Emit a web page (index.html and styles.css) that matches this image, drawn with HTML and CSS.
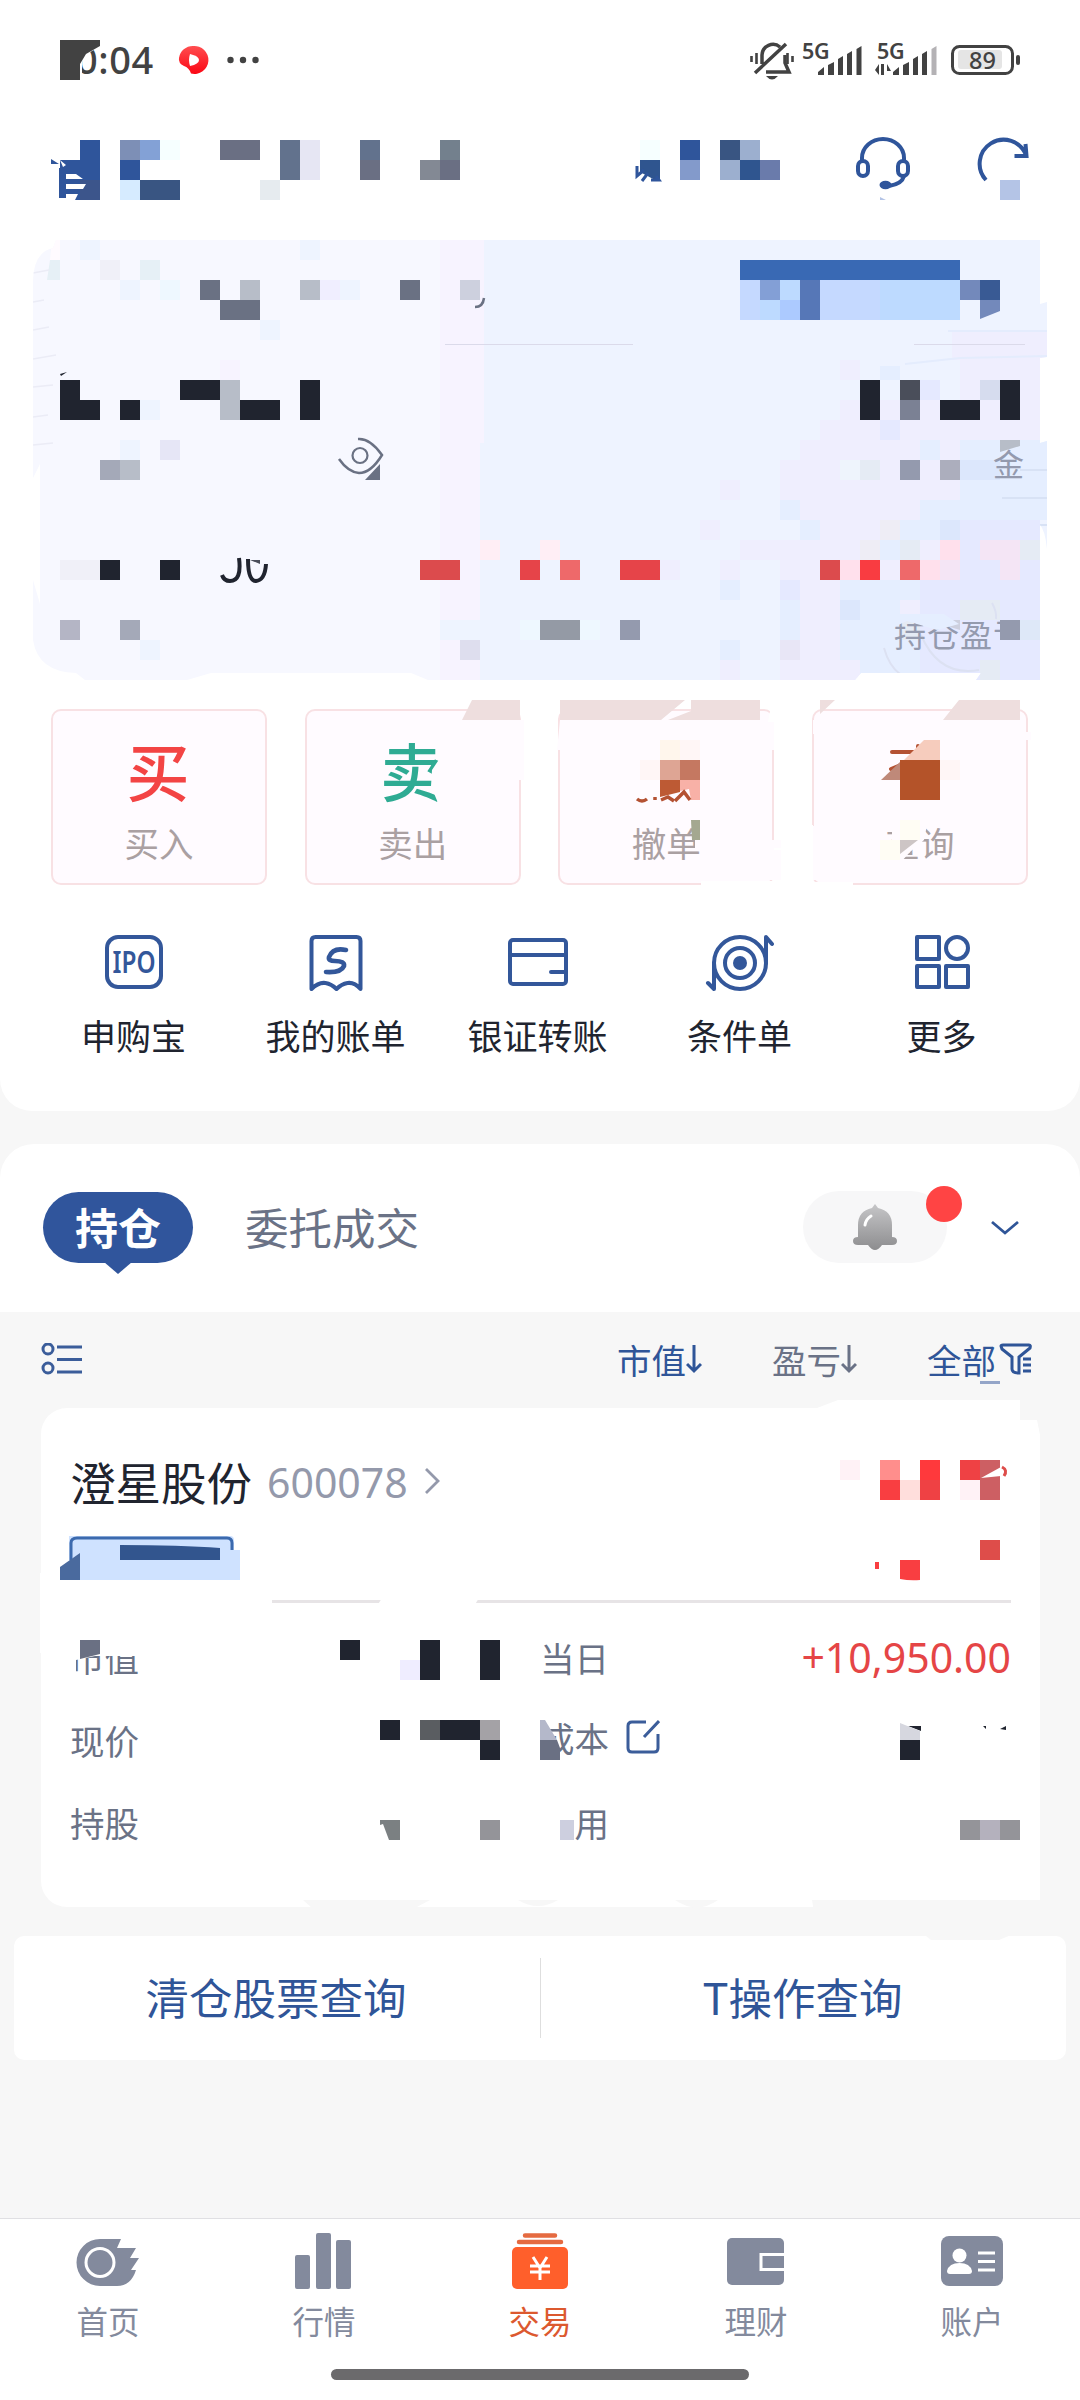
FILE: index.html
```html
<!DOCTYPE html>
<html lang="zh-CN">
<head>
<meta charset="utf-8">
<title>交易</title>
<link rel="stylesheet" href="styles.css">
</head>
<body>
<main class="screen">
  <section class="panel account">
    <header class="status">
      <span class="time">0:04</span>
      <svg class="layer" viewBox="0 0 1080 120">
        <path fill="#fff" d="M76 40h24v6l-16 10-2 6v18h-6z"/>
        <path fill="#424242" d="M60 40h40v6l-14 8-6 10v16H60z"/>
        <path fill="url(#red)" d="M193 46a14 14 0 1 1-2 27.500q-2-6-7-7.500-6-3-5-8a14 14 0 0 1 14-12z"/>
        <path fill="#fff" d="M190 54q9 2 9 6t-9 6q-2-6 0-12z"/>
        <g fill="#424242"><circle cx="230.500" cy="60" r="3.200"/><circle cx="243" cy="60" r="3.200"/><circle cx="255.500" cy="60" r="3.200"/></g>
        <g fill="none" stroke="#424242" stroke-width="3.500">
          <path d="M762 64V55a11 11 0 0 1 18-8M785 55v8l4 9H766M755 73l31-29"/>
          <path stroke-width="2.600" d="M751.500 56v6M756.500 53v11M787.500 53v11M792.500 56v6"/>
        </g>
        <path fill="#424242" d="M766 76h12q-6 7-12 0z"/>
        <path fill="#424242" d="M818 75v-3l6-5v8zM828 75V65l6-3v13zM838 75V59l5-3v19zM847 75V54l5-3v24zM856.500 75V49l5-3v29zM893 75v-3l6-5v8zM903 75V65l6-3v13zM913 75V59l5-3v19zM922 75V54l5-3v24zM875 70l4-6v11zM881 64h3v11h-3zM887 64l4 7h-4z"/>
        <path fill="#b4b2b5" d="M931.500 75V49l5-3v29z"/>
        <rect x="952.500" y="46.500" width="60" height="27" rx="7" fill="none" stroke="#424242" stroke-width="3"/>
        <rect x="958" y="50" width="44" height="19" rx="3" fill="#e5e5e5"/>
        <rect x="1016" y="55" width="4" height="10" rx="2" fill="#424242"/>
        <defs><linearGradient id="red" x2="0" y2="1"><stop stop-color="#ff4e50"/><stop offset="1" stop-color="#fb0714"/></linearGradient></defs>
      </svg>
      <span class="net net-a">5G</span><span class="net net-b">5G</span><span class="charge">89</span>
    </header>

    <div class="topbar">
      <svg class="layer" viewBox="0 120 1080 120">
        <path fill="#2f559b" d="M80 140h20v40H80zM60 160h20v20H60zM59 168h8v30h-8zM51 159l8 5h-8zM120 160h20v20h-20zM680 140h20v20h-20z"/>
        <path fill="#3c558b" d="M80 180h20v20H76z"/>
        <path fill="#2f559b" d="M66 180h14v20H66z"/>
        <path fill="#fff" d="M60 160l6 5-3 2zM66 174h10l7 5H66zM66 184h20l-3 5H66zM66 194h12l-3 6h-9z"/>
        <path fill="#7d8fb6" d="M120 140h20v20h-20z"/><path fill="#83a1d6" d="M140 140h20v20h-20z"/>
        <path fill="#f6ffff" d="M160 140h20v20h-20zM640 140h20v20h-20z"/><path fill="#d6ebff" d="M120 180h20v20h-20z"/>
        <path fill="#395582" d="M140 180h40v20h-40zM720 140h20v20h-20z"/>
        <path fill="#6a6f83" d="M220 140h40v20h-40zM360 160h20v20h-20zM440 160h20v20h-20z"/>
        <path fill="#62728d" d="M280 140h20v40h-20zM360 140h20v20h-20z"/>
        <path fill="#e6e6f3" d="M300 140h20v40h-20z"/><path fill="#e6ebef" d="M260 180h20v20h-20z"/>
        <path fill="#73808d" d="M440 140h20v20h-20z"/><path fill="#838994" d="M420 160h20v20h-20z"/>
        <path fill="#2f558f" d="M640 160h20v20h-5l-15-8zM740 160h20v20h-20z"/>
        <path fill="none" stroke="#2f559b" stroke-width="3" d="M637 166v10l7-6M642 181l6-8M651 180h8l-3-4"/>
        <path fill="#839acb" d="M680 160h20v20h-20z"/><path fill="#9cafcf" d="M740 140h20v20h-20zM720 160h20v20h-20z"/>
        <path fill="#6a7bab" d="M760 160h20v20h-20z"/><path fill="#b4c4e6" d="M1000 180h20v20h-20zM880 197l6 3h-6z"/>
        <g fill="none" stroke="#2f559b" stroke-width="4">
          <path d="M862 161v-3a21 19 0 0 1 42 0v3"/><rect x="858" y="161" width="10" height="15" rx="5"/><rect x="898" y="161" width="10" height="15" rx="5"/>
          <path d="M904 176q-2 8-15 10M986 180a24 24 0 1 1 40-25M1014.500 156h12l-1-12"/>
        </g>
        <ellipse cx="885.500" cy="185" rx="6" ry="4.200" fill="#2f559b"/>
      </svg>
    </div>

    <div class="assets">
      <svg class="layer" viewBox="0 240 1080 450">
        <defs><clipPath id="card"><path d="M33 280Q34 252 53 248L56 240H1040V304L1047 302V357L1040 358V443L1047 441V549Q1045 530 1040 525V680H976L981 673H861L855 680H428L411 673H211L187 680H85L76 673Q38 672 33 640V580L40 604V464L33 478Z"/></clipPath></defs>
        <g clip-path="url(#card)">
          <path fill="#f7f8ff" d="M30 240h410v450H30z"/><path fill="#f7f3ff" d="M440 240h44v450h-44zM220 360h20v20h-20zM520 540h20v20h-20zM600 540h20v20h-20zM580 580h20v20h-20z"/><path fill="#eef3ff" d="M484 240h570v450H480V443h4z"/>
          <path fill="#eef4ff" d="M80 240h20v20H80zM300 240h20v20h-20zM120 280h20v20h-20zM340 280h20v20h-20zM260 320h20v20h-20zM140 400h20v20h-20zM120 440h20v20h-20zM140 640h20v20h-20zM440 620h40v20h-40z"/>
          <path fill="#fffbff" d="M52 240h8v20h-10z"/><path fill="#e6f0f6" d="M50 260h10v20H47zM140 260h20v20h-20z"/><path fill="#f0f0f8" d="M100 260h20v20h-20zM60 560h40v20H60z"/><path fill="#eef8ff" d="M160 280h20v20h-20zM520 620h20v20h-20zM580 620h20v20h-20z"/>
          <path fill="#f0eeff" d="M320 280h20v20h-20z"/><path fill="#e6e6f6" d="M160 440h20v20h-20z"/><path fill="#dedeee" d="M460 640h20v20h-20z"/><path fill="#ffeef5" d="M480 540h20v20h-20zM540 540h20v20h-20z"/>
          <path fill="none" stroke="#ebecf6" stroke-width="1.500" d="M33 273l16-3M33 302l11-2M33 330l16-3M33 359l23-4M33 387l20-2M33 417l15-2M33 445l20-2"/>
          <!-- tinted steps on the right half -->
          <path fill="#efeefe" d="M952 332h96v28h-96zM840 360h20v20h-20zM960 357h80v83H840v-40h120zM820 420h220v20H820zM800 440h160v60H780v-40h20zM720 480h20v20h-20zM700 520h20v20h-20zM780 500h140v20h-40v40H740v-20h60v-20h-20zM720 560h20v20h-20zM780 560h60v120h-60zM720 660h20v20h-20zM840 660h20v20h-20zM660 560h20v20h-20zM800 540h160v40H800zM900 600h20v20h-20z"/>
          <path fill="#e5eeff" d="M880 366h20v14h-20zM920 440h20v20h-20zM960 440h90v80h-70v20h-80v-20h20v-20h40zM780 500h20v20h-20zM800 520h20v20h-20zM880 540h20v20h-20zM840 580h100v100h-80v-20h-20zM720 580h20v20h-20zM720 640h20v20h-20zM780 600h20v40h-20z"/>
          <path fill="#e5e9ff" d="M960 520h80v160H920V580h40zM920 380h20v20h-20zM880 420h20v20h-20zM780 580h20v20h-20z"/>
          <path fill="#efeefe" d="M900 600h20v20h-20zM840 640h0z"/>
          <path fill="#dce7fc" d="M840 600h20v20h-20zM940 520h20v20h-20zM960 460h40v20h-40zM1020 620h20v20h-20z"/>
          <path fill="#e5ebf4" d="M860 460h20v20h-20zM900 540h20v20h-20zM1020 540h20v20h-20zM960 600h40v20h-40zM980 660h20v20h-20zM900 620h20v20h-20z"/><path fill="#eeedf5" d="M880 520h20v20h-20zM860 540h20v20h-20z"/><path fill="#e8e6f6" d="M780 640h20v20h-20z"/>
          <path fill="#eef4fc" d="M840 460h20v20h-20z"/>
          <path fill="none" stroke="#e4ecfd" stroke-width="2" d="M948 331h100M905 364l55-6 90-2"/><path fill="none" stroke="#d8e2f5" stroke-width="2" d="M1020 470h30M1002 498h50M1040 525h10"/><path fill="none" stroke="#dce1f2" stroke-width="2" d="M884 648q5 18 16 26M921 635q18 42 58 35M992 603q5 9 4 16"/>
        </g>
        <path stroke="#dbdaea" d="M445 344.500h188M914 344.500h111"/>
        <path fill="#6a7183" d="M200 280h20v20h-20zM220 300h40v20h-40zM400 280h20v20h-20zM380 464v16h-15z"/>
        <path fill="#b7bdc8" d="M240 280h20v20h-20zM300 280h20v20h-20zM220 380h20v40h-20zM120 460h20v20h-20zM1000 440h20v6l-20 6z"/><path fill="#cdd0de" d="M460 280h20v20h-20zM940 620h20v10l-20-6z"/><path fill="#d6dcee" d="M980 380h20v20h-20z"/>
        <path fill="#a4a9b8" d="M100 460h20v20h-20zM120 620h20v20h-20z"/><path fill="#acaebd" d="M940 460h20v20h-20z"/><path fill="#b4b5c5" d="M60 620h20v20H60z"/><path fill="#949aa5" d="M540 620h40v20h-40z"/><path fill="#949aae" d="M620 620h20v20h-20zM900 460h20v20h-20z"/>
        <path fill="#20242f" d="M60 380h20v20h20v20H60zM120 400h20v20h-20zM180 380h40v20h-40zM240 400h40v20h-40zM300 380h20v40h-20zM60 374l7-2-6 4zM100 560h20v20h-20zM160 560h20v20h-20zM860 380h20v40h-20zM940 400h40v20h-40zM1000 380h20v40h-20z"/>
        <path fill="#4a4e5a" d="M900 380h20v20h-20zM250 560h10v4z"/><path fill="#7b8194" d="M900 400h20v20h-20z"/>
        <path fill="none" stroke="#20242f" stroke-width="4" d="M239 558q3 23-9 23-6 0-8-6M248 559q0 22 8 22 9-1 10-17"/>
        <path fill="none" stroke="#6a7183" stroke-width="2.500" d="M358 439q12-1 24 16-11 18-23 18-11-1-20-14M475 307q8 0 9-9"/><circle cx="360" cy="455.500" r="7.500" fill="none" stroke="#6a7183" stroke-width="2.200"/>
        <path fill="#dc4b4d" d="M420 560h40v20h-40zM820 560h20v20h-20z"/><path fill="#e64449" d="M520 560h20v20h-20zM620 560h40v20h-40z"/><path fill="#ee696a" d="M560 560h20v20h-20zM900 560h20v20h-20z"/><path fill="#f93c41" d="M860 560h20v20h-20z"/>
        <path fill="#ffe0ec" d="M840 560h20v20h-20zM920 560h20v20h-20zM940 540h20v20h-20z"/><path fill="#f4e5f5" d="M940 560h20v20h-20zM980 540h20v20h-20zM1000 540h20v40h-20z"/>
        <path fill="#3969b4" d="M740 260h220v20H740z"/><path fill="#bddaff" d="M740 280h220v40H740z"/><path fill="#c5d9ff" d="M740 280h20v40h-20zM820 280h60v40h-60z"/><path fill="#839fd6" d="M760 280h20v20h-20z"/><path fill="#5677b7" d="M800 280h20v40h-20z"/><path fill="#accaff" d="M780 300h20v20h-20z"/><path fill="#7389bb" d="M960 280h20v20h-20zM980 300h20v11l-20 8z"/><path fill="#395a94" d="M980 280h20v20h-20z"/>
      </svg>
      <span class="cash">金</span>
      <span class="profit">持仓盈亏</span>
      <svg class="layer" viewBox="0 240 1080 450"><path fill="#e5e9ff" d="M1000 640h26v12h-26zM1004 614h22v7h-22z"/><path fill="#949aae" d="M1000 620h20v20h-20z"/><path fill="#e5eeff" d="M894 614h50l15 10-22 6-30-9-13 6z"/><path fill="#dee8f8" d="M1020 620h20v20h-20z"/></svg>
    </div>

    <nav class="actions">
      <a class="action"><b class="buy">买</b><span>买入</span></a>
      <a class="action"><b class="sell">卖</b><span>卖出</span></a>
      <a class="action"><b class="undo">撤</b><span>撤单</span></a>
      <a class="action"><b class="find">查</b><span>查询</span></a>
      <svg class="layer" viewBox="0 690 1080 200">
        <path fill="#fffbff" d="M440 758l-8 12-1 16 7 17h12v-54h-10zM517 720h7v60h-7zM560 720h221v30h-9v90h9v40h-16v-40h-50v-40h-80v-50h-78zM690 760h20v90h-15v-40zM813 720h200v12h18v8h-18v50h-70v15h-60v-30l20-20 22-16h-80v-5h-32zM888 778h14l10-20 20-20h10v66h-54zM892 820h36l-4 20-14 12-9 10h-9z"/>
        <path fill="#fff" d="M772 700h20v50h-18v-28h-6zM774 848h14v40h-87v-7h73zM800 825h13v57h40v6h-53z"/>
        <path fill="#fffbff" d="M700 850h81v30h-81zM813 826h8v54h-8z"/>
        <path fill="#eedede" d="M472 700h48v20h-58zM560 700h125l-24 20H560zM691 700h69v20h-92l23-9zM820 700h15l-15 14zM959 700h61v20h-77z"/>
        <path fill="#fff6ec" d="M660 740h20v20h-20z"/><path fill="#fff6f6" d="M680 740h20v20h-20zM640 760h20v20h-20zM940 760h20v20h-20z"/><path fill="#dea594" d="M660 760h20v20h-20z"/><path fill="#c57861" d="M680 760h20v20h-20z"/><path fill="#bd5a34" d="M660 780h20v12l-20 5z"/><path fill="#f8b1a7" d="M680 780h20v20h-9l-2-11-9 2z"/>
        <path fill="none" stroke="#b45233" stroke-width="3.500" d="M637 799q5 4 10 0M655 797v3M661 800l7-3 6 4M675 801l9-9 6 8"/>
        <path fill="#a4a890" d="M691 820h9v20h-8z"/>
        <path fill="none" stroke="#b45233" stroke-width="4" stroke-linecap="round" d="M892 752h24M891 769l12-5M918 746v3"/>
        <path fill="#f6ccbd" d="M924 740h16v20h-36z"/><path fill="#bf8979" d="M900 762v18h-19z"/><path fill="#b45329" d="M900 760h40v40h-40z"/><path fill="#fffdf4" d="M880 840h20v20h-20zM900 820h20v20h-20z"/><path fill="#cdc5c5" d="M900 840h18l-18 14z"/>
      </svg>
    </nav>

    <nav class="quick">
      <a><svg viewBox="0 0 60 60"><rect x="3" y="4" width="54" height="50" rx="11"/><text class="ipo" x="30" y="39.500" text-anchor="middle" textLength="43" lengthAdjust="spacingAndGlyphs">IPO</text></svg>申购宝</a>
      <a><svg viewBox="0 0 60 60"><path d="M5.500 56V8q0-4 4-4h41q4 0 4 4v48q-6-7-13-6-6 1-11 6-5-5-11-6-7-1-14 6z"/><path stroke-width="4.600" d="M40 17q-13-3-17 7-1 4 6 4 10 0 9 5-3 7-18 6"/></svg>我的账单</a>
      <a><svg viewBox="0 0 60 60"><rect x="2" y="7" width="56" height="44" rx="3"/><path d="M2 22h56M43 39h15"/></svg>银证转账</a>
      <a><svg class="wide" viewBox="0 0 70 60"><ellipse cx="35" cy="30" rx="26" ry="26"/><path d="M61 30V4l6 7M9 30v26l-6-6"/><circle cx="35" cy="30" r="15"/><circle cx="35" cy="30" r="7" class="solid"/></svg>条件单</a>
      <a><svg viewBox="0 0 60 60"><path d="M5 4h22v22H5zM5 33h22v21H5zM34 33h22v21H34z"/><circle cx="45" cy="15" r="11"/></svg>更多</a>
    </nav>
  </section>

  <section class="panel tabs">
    <span class="tab-on">持仓</span><span class="tab">委托成交</span>
    <span class="alert"><svg viewBox="0 0 46 48"><defs><linearGradient id="bell" x2="0" y2="1"><stop stop-color="#c6c6c8"/><stop offset="1" stop-color="#8d8d8f"/></linearGradient></defs><path fill="url(#bell)" d="M23 1l3 4q14 3 14 17v12q5 0 5 4t-5 4H30q-7 10-14 0H6q-5 0-5-4t5-4V22Q6 8 20 5z"/><path fill="none" stroke="#fff" stroke-width="3" stroke-linecap="round" d="M13 22q1-6 6-9"/></svg><i></i></span>
    <svg class="down" viewBox="0 0 28 16"><path d="M1 2l13 11L27 2"/></svg>
  </section>

  <div class="sorts">
    <svg class="list" viewBox="0 0 42 32"><circle cx="7" cy="6" r="5"/><circle cx="7" cy="25" r="5"/><path d="M16 4h25M16 16.500h25M16 29h25"/></svg>
    <span class="sort on">市值<svg viewBox="0 0 16 30"><path d="M8 1v26M1 20l7 7 7-7"/></svg></span>
    <span class="sort">盈亏<svg viewBox="0 0 16 30"><path d="M8 1v26M1 20l7 7 7-7"/></svg></span>
    <span class="sort on all">全部<svg class="funnel" viewBox="0 0 34 32"><path d="M2 3q0-1 2-1h26q2 0 1 3L20 14v16q-7 0-7-4V14L3 6zM24 16h8M24 22h8M24 28h8"/></svg><i></i></span>
  </div>

  <article class="stock">
    <svg class="layer" viewBox="41 1408 998 499">
      <path fill="#fff" d="M817 1408l21-8h182v20h17l3 15v465h-20v-480h-200zM60 1573h-20v80h20z"/>
      <path fill="#f7f7f7" d="M1020 1400h24v20h-24zM812 1900h232v12H814zM303 1900h127l-15 8H312zM518 1900h40q-20 12-40 0zM675 1900h43q-21 15-43 0z"/>
    </svg>
    <div class="stock-head"><h2>澄星股份</h2><span class="code">600078</span><svg class="go" viewBox="0 0 16 28"><path d="M2 2l12 12L2 26"/></svg></div>
    <div class="rule"></div>
    <dl class="facts">
      <div><dt>市值</dt><dd></dd></div><div><dt>当日</dt><dd>+10,950.00</dd></div>
      <div><dt>现价</dt><dd></dd></div><div class="cost"><dt>成本</dt><svg class="edit" viewBox="0 0 34 34"><path d="M20 2H6Q2 2 2 6v22q0 4 4 4h22q4 0 4-4V14M18 17L33 1"/></svg></div>
      <div><dt>持股</dt><dd></dd></div><div><dt>费用</dt><dd></dd></div>
    </dl>
    <svg class="layer" viewBox="41 1408 998 499">
      <path fill="#fff" d="M382 1598h97l-5 8h-97zM70 1640h75v16H95l-19 4v15h-6zM536 1800h38v46h-38zM536 1718h14v40h-10z"/>
      <path fill="#cfe2ff" d="M73 1536h157q4 0 4 4v10h6v30H69v-44z"/><path fill="none" stroke="#3c6aae" stroke-width="3" d="M71 1560v-17q0-5 6-5h150q5 0 5 5v7"/>
      <path fill="#4a6a9e" d="M60 1567l20-14v27H60z"/><path fill="#32558e" d="M120 1545q60 0 100 3v12H120z"/>
      <path fill="#fff2f6" d="M840 1460h20v20h-20zM960 1480h20v20h-20z"/><path fill="#ff8e8c" d="M880 1460h20v20h-20z"/><path fill="#ff393c" d="M920 1460h20v20h-20z"/><path fill="#ef4144" d="M920 1480h20v20h-20zM960 1460h20v20h-20z"/><path fill="#f93e41" d="M880 1480h20v20h-20zM900 1560h20v20q-10 1-20-1zM875 1562h4v7h-4z"/><path fill="#ffdedc" d="M900 1480h20v20h-20z"/><path fill="#cd5f63" d="M980 1460h20v40h-20z"/><path fill="#fff" d="M981 1478l20-11q4 5 0 9z"/><path fill="none" stroke="#de4d4a" stroke-width="3" d="M1002 1467q6 3 2 9"/><path fill="#de4d4a" d="M980 1540h20v20h-20z"/>
      <path fill="#6a7083" d="M80 1640h20v14l-20 5zM540 1740h17l3 8v12h-20z"/>
      <path fill="#20242f" d="M340 1640h20v20h-20zM420 1640h20v40h-20zM480 1640h20v40h-20zM380 1720h20v20h-20zM440 1720h40v20h-40zM480 1740h20v20h-20zM900 1740h20v20h-20zM908 1726h13v5zM983 1726h3v3zM1000 1729l6-3v4z"/>
      <path fill="#efedff" d="M400 1660h20v20h-20z"/><path fill="#5a5d61" d="M420 1720h20v20h-20z"/><path fill="#a4a2a6" d="M480 1720h20v20h-20z"/><path fill="#7b8082" d="M380 1820h20v20h-11l-6-16-3 1z"/><path fill="#949499" d="M480 1820h20v20h-20zM960 1820h60v20h-60z"/><path fill="#b4b1bd" d="M980 1820h20v20h-20z"/>
      <path fill="#b4b8ca" d="M540 1720h5l12 20h-17z"/><path fill="#d6d7df" d="M900 1723l20 8v9h-20z"/><path fill="#cdcfdf" d="M560 1820h14v20h-14z"/>
    </svg>
  </article>

  <nav class="queries"><a>清仓股票查询</a><a>T操作查询</a><svg class="layer" viewBox="14 1936 1052 124"><path fill="#f7f7f7" d="M925 1935h86l-12 5h-68z"/></svg></nav>

  <footer class="dock">
    <nav>
      <a><svg viewBox="0 0 64 60"><path class="fill" d="M27 9h18l-4 9h19l-6 10h9l-8 12h5q-5 16-19 16H24A23 23 0 0 1 24 9z"/><circle cx="24" cy="32.500" r="14"/></svg>首页</a>
      <a><svg viewBox="0 0 64 60"><path class="fill" d="M5 25h11q2 0 2 2v30q0 2-2 2H5q-2 0-2-2V27q0-2 2-2zM26 3h11q2 0 2 2v52q0 2-2 2H26q-2 0-2-2V5q0-2 2-2zM46 10h11q2 0 2 2v45q0 2-2 2H46q-2 0-2-2V12q0-2 2-2z"/></svg>行情</a>
      <a class="active"><svg viewBox="0 0 64 60"><rect class="fill" x="4" y="17" width="56" height="42" rx="5"/><path class="bars" d="M17 5.500h30M11 12h42"/><path d="M25 27l7 11 7-11M32 37v13M22 36h20M22 42h20"/></svg>交易</a>
      <a><svg viewBox="0 0 64 60"><rect class="fill" x="3" y="8" width="57" height="47" rx="5"/><path d="M62 24.500H37v15h25"/></svg>理财</a>
      <a><svg viewBox="0 0 64 60"><rect class="fill" x="1" y="6" width="62" height="50" rx="8"/><circle class="white" cx="19.500" cy="25.500" r="7"/><path class="white" d="M7 41q2-8 12.500-8T32 41q0 3-3 3H10q-3 0-3-3z"/><path d="M38 23h17M38 31.500h17M38 40h17"/></svg>账户</a>
    </nav>
    <div class="handle"></div>
  </footer>
</main>
</body>
</html>
```
FILE: styles.css
```css
* { box-sizing: border-box; }
body { margin: 0; background: #f7f7f7; font-family: "Noto Sans", "Noto Sans CJK SC", sans-serif; }
.screen { width: 1080px; height: 2400px; display: flex; flex-direction: column; overflow: hidden; background: #f7f7f7; }
.layer { position: absolute; inset: 0; width: 100%; height: 100%; overflow: visible; pointer-events: none; }
.panel { background: #fff; }
.account { height: 1111px; border-radius: 0 0 32px 32px; flex: none; }

.status { position: relative; height: 120px; display: flex; padding-left: 76px; color: #424242; }
.time { font-size: 38px; font-weight: 500; line-height: 119px; letter-spacing: .6px; }
.net, .charge { position: absolute; line-height: 24px; }
.net { top: 39px; font-size: 21.500px; font-weight: 600; letter-spacing: -.3px; }
.net-a { left: 802px; }
.net-b { left: 877px; }
.charge { left: 969px; top: 48px; font-size: 23.500px; font-weight: 500; }

.topbar { position: relative; height: 120px; }
.assets { position: relative; height: 450px; color: #949aae; }
.cash, .profit { position: absolute; font-family: "Noto Sans CJK SC", sans-serif; font-size: 31px; line-height: 40px; }
.cash { left: 993px; top: 203px; }
.profit { left: 894px; top: 373px; font-size: 32px; letter-spacing: 1px; }

.actions { position: relative; height: 200px; padding: 19px 52px 5px 51px; display: grid; grid-template-columns: repeat(4, 216px); justify-content: space-between; }
.action { height: 176px; border: 2px solid #f8e1e4; border-radius: 10px; background: #fffbff; display: flex; flex-direction: column; align-items: center; padding-top: 23px; font-family: "Noto Sans CJK SC", sans-serif; }
.action b { font-size: 63px; line-height: 70px; font-weight: 500; margin-right: 2px; }
.action span { font-size: 34.500px; line-height: 40px; margin-top: 18px; color: #aaa0a2; }
.buy { color: #f34444; }
.sell { color: #2fab93; }
.undo, .find { color: transparent; }

.quick { display: grid; grid-template-columns: repeat(5, 202px); justify-content: center; padding: 43px 0 0; margin-left: -5px; }
.quick a { display: flex; flex-direction: column; align-items: center; gap: 16px; font: 35px/52px "Noto Sans CJK SC", sans-serif; color: #20242f; }
.quick svg { width: 60px; height: 60px; fill: none; stroke: #33579a; stroke-width: 4; stroke-linejoin: round; stroke-linecap: round; }
.quick .wide { width: 70px; }
.quick .solid { fill: #33579a; stroke: none; }
.quick .ipo { font: 600 30px "Noto Sans", sans-serif; fill: #33579a; stroke: none; }

.tabs { margin-top: 33px; height: 168px; flex: none; border-radius: 34px 34px 0 0; padding: 48px 61px 0 43px; display: flex; align-items: flex-start; font-family: "Noto Sans CJK SC", sans-serif; }
.tab-on { position: relative; width: 150px; height: 71px; border-radius: 36px; background: #30559c; color: #fff; font-size: 43px; font-weight: 700; line-height: 69px; text-align: center; }
.tab-on::after { content: ""; position: absolute; left: 61px; top: 70px; border: 14px solid transparent; border-top: 12px solid #30559c; border-bottom: 0; }
.tab { margin-left: 52px; font-size: 43.500px; font-weight: 400; line-height: 69px; color: #6a7286; }
.alert { position: relative; margin: -1px 0 0 auto; width: 144px; height: 72px; border-radius: 36px; background: #f7f7f8; display: flex; align-items: center; justify-content: center; }
.alert svg { width: 46px; height: 48px; }
.alert i { position: absolute; right: -15px; top: -5px; width: 36px; height: 36px; border-radius: 50%; background: #ff4444; }
.down { width: 28px; height: 16px; margin: 28px 0 0 44px; fill: none; stroke: #2f5598; stroke-width: 2.800; }

.sorts { height: 96px; flex: none; display: flex; align-items: center; padding: 0 47px 2px 41px; font: 34.500px/50px "Noto Sans CJK SC", sans-serif; color: #6a7286; }
.sorts svg { fill: none; stroke: currentColor; stroke-width: 3; }
.sorts .list { width: 42px; height: 32px; margin-right: auto; color: #3b5d9a; }
.sort { position: relative; display: flex; align-items: center; margin-left: 70px; }
.sort svg { width: 16px; height: 30px; }
.sort.on { color: #2f5598; }
.sort .funnel { width: 34px; height: 32px; margin-left: 3px; }
.sort i { position: absolute; left: 53px; bottom: 0; width: 20px; height: 3px; background: #94a5c8; }

.stock { position: relative; margin: 0 41px 0 41px; height: 499px; flex: none; border-radius: 26px; background: #fff; padding: 40px 28px 0 29px; }
.stock-head { position: relative; height: 152px; display: flex; align-items: flex-start; }
.stock h2 { margin: 0; font: 400 45.500px/66px "Noto Sans CJK SC", sans-serif; color: #20242f; }
.code { margin-left: 15px; font-size: 41px; line-height: 68px; color: #9499ab; }
.go { width: 16px; height: 28px; margin: 19px 0 0 16px; fill: none; stroke: #9499ab; stroke-width: 2.800; }
.rule { height: 3px; background: #e7e4e6; margin-left: 202px; }
.facts { margin: 13px 0 0; display: grid; grid-template-columns: 470px 471px; grid-auto-rows: 82.500px; }
.facts div { display: flex; justify-content: space-between; align-items: center; height: 82px; }
.facts dt { font: 34.500px/50px "Noto Sans CJK SC", sans-serif; color: #6a7286; }
.facts dd { margin: 0; font-size: 41px; line-height: 50px; color: #e54546; }
.facts .cost { justify-content: flex-start; padding-bottom: 5px; }
.edit { width: 34px; height: 34px; margin-left: 17px; fill: none; stroke: #3b5d9a; stroke-width: 3; }

.queries { position: relative; margin: 29px 14px 0; height: 124px; flex: none; border-radius: 10px; background: #fff; display: grid; grid-template-columns: 1fr 1fr; align-items: center; }
.queries a { height: 80px; font: 43.500px/78px "Noto Sans CJK SC", sans-serif; color: #2f5598; text-align: center; padding-right: 2px; }
.queries a + a { border-left: 1px solid #dedede; }

.dock { margin-top: auto; height: 182px; flex: none; border-top: 1px solid #e0e0e3; background: #fff; }
.dock nav { display: grid; grid-template-columns: repeat(5, 1fr); padding-top: 11px; }
.dock a { display: flex; flex-direction: column; align-items: center; gap: 7px; font: 31.500px/46px "Noto Sans CJK SC", sans-serif; color: #838a9d; }
.dock svg { width: 64px; height: 60px; fill: none; stroke: #fff; stroke-width: 3; }
.dock .fill { fill: #838a9d; stroke: none; }
.dock .white { fill: #fff; stroke: none; }
.dock .active { color: #dc592f; }
.dock .active .fill { fill: #ff5f2b; }
.dock .bars { stroke: #e56a40; stroke-width: 4.500; stroke-linecap: round; }
.handle { width: 418px; height: 11px; border-radius: 6px; margin: 26px auto 0; background: #6b6a6c; }
```
